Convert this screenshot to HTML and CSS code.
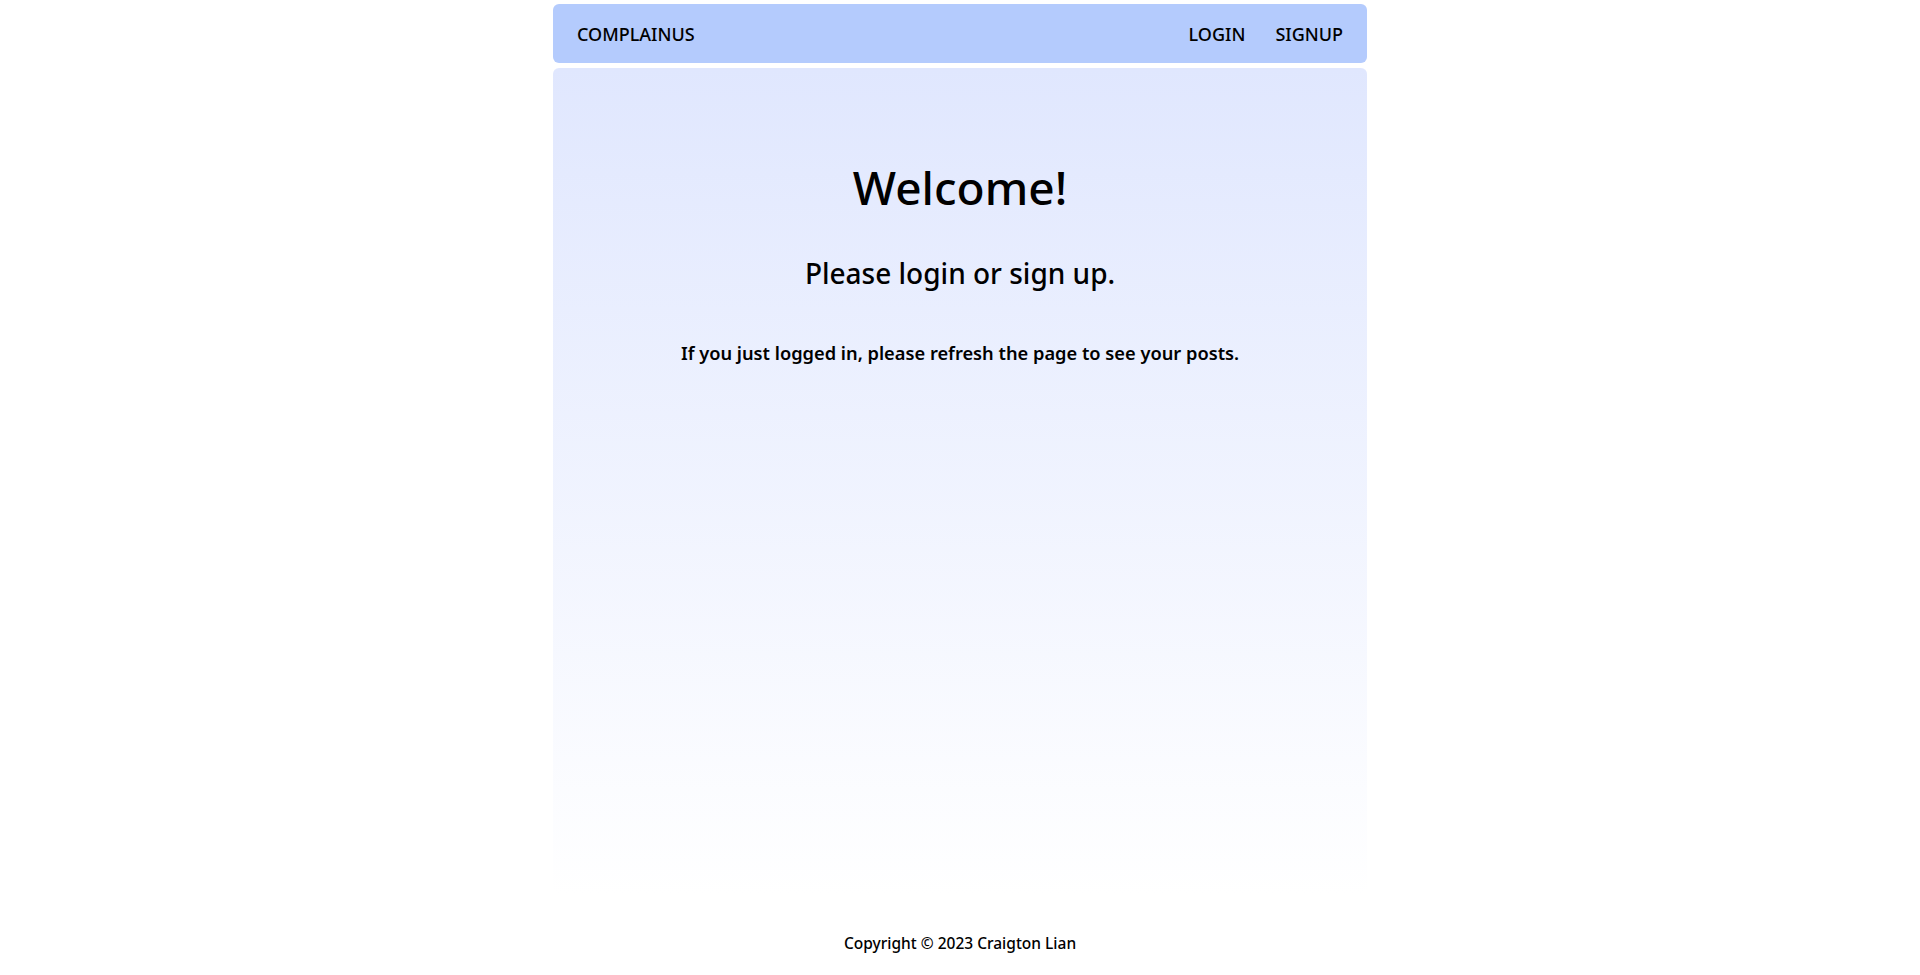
FILE: index.html
```html
<!DOCTYPE html>
<html>
<head>
<meta charset="utf-8">
<link rel="stylesheet" href="styles.css">
</head>
<body>
<div class="page">
  <nav class="nav">
    <a class="brand">COMPLAINUS</a>
    <div class="links">
      <a class="link">LOGIN</a>
      <a class="link">SIGNUP</a>
    </div>
  </nav>
  <main class="card">
    <h1 class="title">Welcome!</h1>
    <h2 class="subtitle">Please login or sign up.</h2>
    <p class="note">If you just logged in, please refresh the page to see your posts.</p>
  </main>
</div>
<footer class="footer">Copyright © 2023 Craigton Lian</footer>
</body>
</html>
```
FILE: styles.css
```css
html, body {
  margin: 0;
  padding: 0;
  background: #ffffff;
}
body {
  font-family: "Noto Sans", "Open Sans", sans-serif;
  color: #000;
  height: 975px;
  display: flex;
  flex-direction: column;
}
.page {
  width: 814px;
  margin: 0 auto;
  padding-top: 4px;
  display: flex;
  flex-direction: column;
  gap: 5px;
}
.nav {
  height: 59px;
  background: #b4cbfd;
  border-radius: 6px;
  display: flex;
  align-items: center;
  justify-content: space-between;
  padding: 0 24px;
  box-sizing: border-box;
  font-size: 18px;
  font-weight: 500;
}
.links {
  display: flex;
  gap: 30px;
}
.card {
  height: 827px;
  border-radius: 6px;
  background: linear-gradient(to bottom, #e0e7fe 0%, #ffffff 100%);
  display: flex;
  flex-direction: column;
  align-items: center;
  padding-top: 85px;
  box-sizing: border-box;
}
.title {
  margin: 0;
  font-size: 46px;
  font-weight: 500;
  line-height: 68px;
}
.subtitle {
  margin: 33px 0 0;
  font-size: 28px;
  font-weight: 500;
  line-height: 38px;
}
.note {
  margin: 48px 0 0;
  font-size: 18.25px;
  font-weight: 600;
  line-height: 26px;
}
.footer {
  margin-top: 37px;
  text-align: center;
  font-size: 15.5px;
  font-weight: 500;
  font-family: "Noto Sans", sans-serif;
}
```
